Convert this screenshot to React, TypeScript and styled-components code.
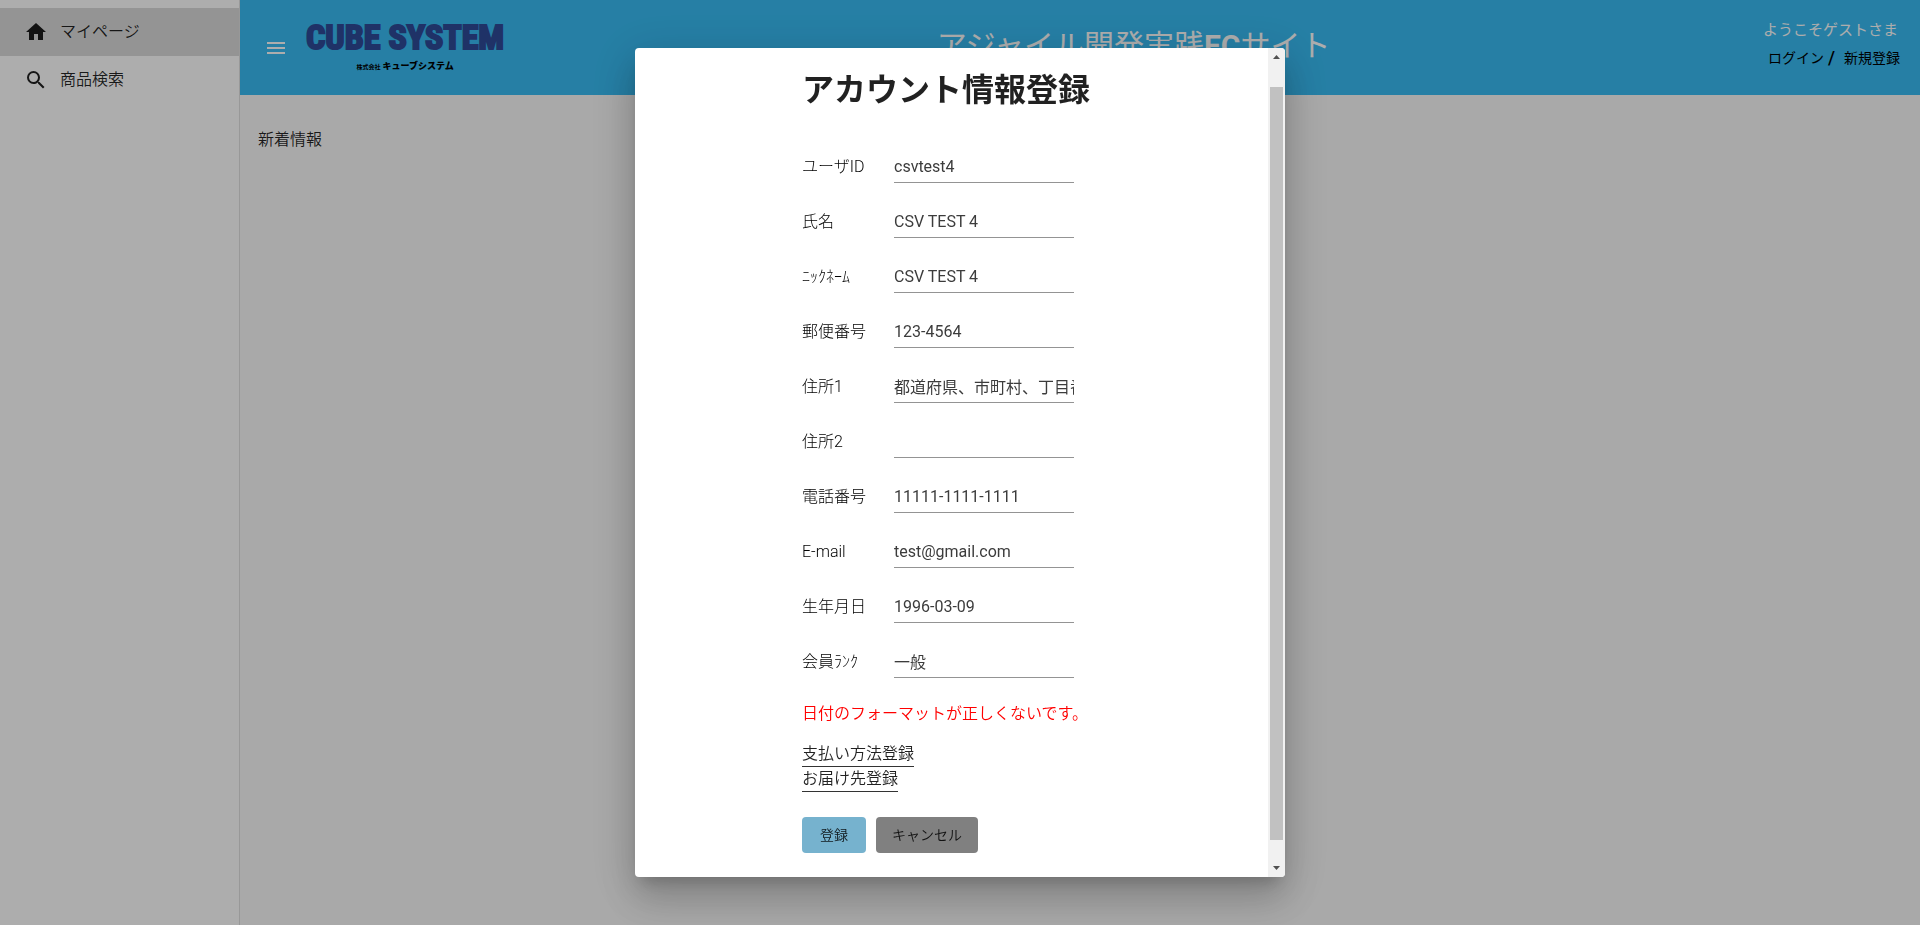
import React from "react";
import styled, { createGlobalStyle, css } from "styled-components";

const GlobalStyle = createGlobalStyle`
  *, *::before, *::after { box-sizing: border-box; }
  body {
    margin: 0;
    background: #fafafa;
    color: rgba(0, 0, 0, 0.87);
    font-family: Roboto, "Noto Sans CJK JP", sans-serif;
    font-size: 16px;
    font-weight: 350;
    line-height: 24px;
  }
  button, input { font: inherit; color: inherit; }
`;

const Layout = styled.div`
  display: flex;
  min-height: 100vh;
`;

const Sidebar = styled.nav`
  flex: 0 0 240px;
  padding-top: 8px;
  background: #fff;
  border-right: 1px solid #e0e0e0;
`;

const NavItem = styled.a<{ $active?: boolean }>`
  display: flex;
  align-items: center;
  gap: 12px;
  height: 48px;
  padding: 0 24px;
  color: rgba(0, 0, 0, 0.87);
  text-decoration: none;
  background: ${(p) => (p.$active ? "#dadada" : "transparent")};
`;

const Icon = styled.svg`
  width: 24px;
  height: 24px;
  fill: currentColor;
`;

const Main = styled.div`
  flex: 1;
  min-width: 0;
`;

const Toolbar = styled.header`
  display: flex;
  align-items: center;
  justify-content: space-between;
  height: 95px;
  padding: 0 20px 0 24px;
  background: #38bcf4;
  color: #fff;
`;

const ToolbarStart = styled.div`
  display: flex;
  align-items: center;
  gap: 18px;
`;

const MenuButton = styled.button`
  display: flex;
  padding: 0;
  border: 0;
  background: none;
`;

const Logo = styled.a`
  display: flex;
  flex-direction: column;
  align-items: center;
  text-decoration: none;
  white-space: nowrap;
`;

const LogoName = styled.span`
  color: #2f4b98;
  font: 700 34px/38px "Roboto Condensed", "Open Sans Condensed", "Noto Sans CJK JP", sans-serif;
  -webkit-text-stroke: 2px #2f4b98;
`;

const LogoCompany = styled.span`
  color: #000;
  font-size: 9px;
  font-weight: 900;
  line-height: 20px;
`;

const LogoPrefix = styled.small`
  margin-right: 2px;
  font-size: 6px;
  font-weight: 700;
`;

const SiteTitle = styled.h1`
  margin: 0;
  padding-bottom: 4px;
  font-size: 30px;
  font-weight: 400;
  line-height: 40px;
`;

const TitleAccent = styled.strong`
  font-weight: 700;
`;

const Account = styled.div`
  display: flex;
  flex-direction: column;
  align-items: flex-end;
  padding-bottom: 7px;
`;

const Greeting = styled.span`
  padding-right: 2px;
  font-size: 15px;
  font-weight: 400;
  line-height: 28px;
`;

const AccountLinks = styled.div`
  display: flex;
  gap: 4px;
  color: #000;
  line-height: 28px;
`;

const AccountLink = styled.a`
  color: #000;
  font-size: 14px;
  font-weight: 400;
  text-decoration: none;
`;

const Slash = styled.span`
  padding-right: 5px;
  font-size: 18px;
  font-weight: 500;
`;

const News = styled.section`
  padding: 33px 18px;
`;

const Overlay = styled.div`
  position: fixed;
  inset: 0;
  display: flex;
  align-items: center;
  justify-content: center;
  background: rgba(0, 0, 0, 0.32);
`;

const Dialog = styled.div`
  display: flex;
  width: 650px;
  max-width: 90%;
  max-height: 90vh;
  overflow: hidden;
  border-radius: 4px;
  background: #fff;
  box-shadow: 0 11px 15px -7px rgba(0, 0, 0, 0.2),
    0 24px 38px 3px rgba(0, 0, 0, 0.14), 0 9px 46px 8px rgba(0, 0, 0, 0.12);
`;

const DialogBody = styled.form`
  flex: 1;
  min-width: 0;
  padding: 18px 24px 24px 167px;
`;

const DialogTitle = styled.h2`
  margin: 0 0 36px;
  font-size: 32px;
  font-weight: 700;
  line-height: 48px;
`;

const Field = styled.div`
  display: grid;
  grid-template-columns: 92px 180px;
  align-items: center;
  height: 33px;
  margin-bottom: 22px;
`;

const FieldLabel = styled.label`
  color: #000;
  font-weight: 300;
`;

const TextInput = styled.input`
  width: 100%;
  height: 33px;
  padding: 0;
  border: 0;
  border-bottom: 1px solid #949494;
  outline: 0;
  background: none;
  color: #3c3c3c;
  font-weight: 400;
`;

const ErrorText = styled.p`
  margin: 0;
  padding: 2px 0 16px;
  color: #f00;
`;

const FormLinks = styled.div`
  display: flex;
  flex-direction: column;
  align-items: flex-start;
`;

const FormLink = styled.a`
  height: 25px;
  border-bottom: 1px solid #333;
  color: inherit;
  text-decoration: none;
`;

const Actions = styled.div`
  display: flex;
  gap: 10px;
  margin-top: 25px;
`;

const ActionButton = styled.button<{ $primary?: boolean }>`
  height: 36px;
  min-width: 64px;
  padding: 0 16px;
  border: 0;
  border-radius: 4px;
  font-size: 14px;
  ${(p) =>
    p.$primary
      ? css`background: #76b2ce;`
      : css`background: #808080;`}
`;

const ScrollBar = styled.div`
  display: flex;
  flex: 0 0 17px;
  flex-direction: column;
  align-items: center;
  background: #f1f1f1;
`;

const ScrollArrow = styled.svg`
  width: 17px;
  height: 17px;
  fill: #505050;
`;

const ScrollTrack = styled.div`
  flex: 1;
  display: flex;
  padding: 22px 0 20px;
`;

const ScrollThumb = styled.div`
  width: 13px;
  background: #c1c1c1;
`;

const fields = [
  { id: "userId", label: "ユーザID", value: "csvtest4" },
  { id: "name", label: "氏名", value: "CSV TEST 4" },
  { id: "nickname", label: "ﾆｯｸﾈｰﾑ", value: "CSV TEST 4" },
  { id: "zip", label: "郵便番号", value: "123-4564" },
  { id: "address1", label: "住所1", value: "都道府県、市町村、丁目番地" },
  { id: "address2", label: "住所2", value: "" },
  { id: "phone", label: "電話番号", value: "11111-1111-1111" },
  { id: "email", label: "E-mail", value: "test@gmail.com" },
  { id: "birthday", label: "生年月日", value: "1996-03-09" },
  { id: "rank", label: "会員ﾗﾝｸ", value: "一般" },
];

export default function App() {
  return (
    <>
      <GlobalStyle />
      <Layout>
        <Sidebar>
          <NavItem href="#mypage" $active>
            <Icon viewBox="0 0 24 24"><path d="M10 20v-6h4v6h5v-8h3L12 3 2 12h3v8z" /></Icon>
            マイページ
          </NavItem>
          <NavItem href="#search">
            <Icon viewBox="0 0 24 24"><path d="M15.5 14h-.79l-.28-.27A6.471 6.471 0 0 0 16 9.5 6.5 6.5 0 1 0 9.5 16c1.61 0 3.09-.59 4.23-1.57l.27.28v.79l5 4.99L20.49 19l-4.99-5zm-6 0C7.01 14 5 11.99 5 9.5S7.01 5 9.5 5 14 7.01 14 9.5 11.99 14 9.5 14z" /></Icon>
            商品検索
          </NavItem>
        </Sidebar>
        <Main>
          <Toolbar>
            <ToolbarStart>
              <MenuButton type="button" aria-label="menu">
                <Icon viewBox="0 0 24 24" color="#fff"><path d="M3 18h18v-2H3v2zm0-5h18v-2H3v2zm0-7v2h18V6H3z" /></Icon>
              </MenuButton>
              <Logo href="#home">
                <LogoName>CUBE SYSTEM</LogoName>
                <LogoCompany><LogoPrefix>株式会社</LogoPrefix>キューブシステム</LogoCompany>
              </Logo>
            </ToolbarStart>
            <SiteTitle>アジャイル開発実践<TitleAccent>EC</TitleAccent>サイト</SiteTitle>
            <Account>
              <Greeting>ようこそゲストさま</Greeting>
              <AccountLinks>
                <AccountLink href="#login">ログイン</AccountLink>
                <Slash>/</Slash>
                <AccountLink href="#signup">新規登録</AccountLink>
              </AccountLinks>
            </Account>
          </Toolbar>
          <News>新着情報</News>
        </Main>
      </Layout>
      <Overlay>
        <Dialog role="dialog" aria-modal="true" aria-labelledby="dialog-title">
          <DialogBody>
            <DialogTitle id="dialog-title">アカウント情報登録</DialogTitle>
            {fields.map((f) => (
              <Field key={f.id}>
                <FieldLabel htmlFor={f.id}>{f.label}</FieldLabel>
                <TextInput id={f.id} defaultValue={f.value} />
              </Field>
            ))}
            <ErrorText>日付のフォーマットが正しくないです。</ErrorText>
            <FormLinks>
              <FormLink href="#payment">支払い方法登録</FormLink>
              <FormLink href="#delivery">お届け先登録</FormLink>
            </FormLinks>
            <Actions>
              <ActionButton type="button" $primary>登録</ActionButton>
              <ActionButton type="button">キャンセル</ActionButton>
            </Actions>
          </DialogBody>
          <ScrollBar aria-hidden="true">
            <ScrollArrow viewBox="0 0 17 17"><path d="M5 11h7L8.500 7z" /></ScrollArrow>
            <ScrollTrack><ScrollThumb /></ScrollTrack>
            <ScrollArrow viewBox="0 0 17 17"><path d="M5 6h7L8.500 10z" /></ScrollArrow>
          </ScrollBar>
        </Dialog>
      </Overlay>
    </>
  );
}
